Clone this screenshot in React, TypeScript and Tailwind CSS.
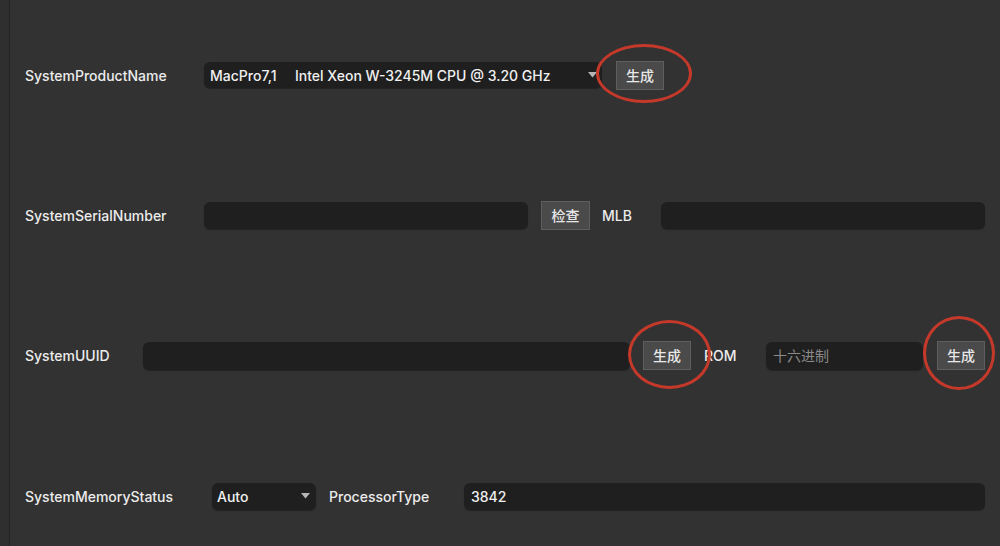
import React from "react";

const font = { fontFamily: "Inter, 'Noto Sans CJK SC', sans-serif" };

function Btn({ label }: { label: string }) {
  return (
    <div className="flex h-[29px] w-[48px] shrink-0 items-center justify-center border border-[#5e5e5e] bg-[#4a4a4a] text-[14px] font-medium text-[#e8e8e8]">
      {label}
    </div>
  );
}

function Ring({ cls }: { cls: string }) {
  return <div className={"pointer-events-none absolute rounded-[50%] border-[3px] border-[#c4392a] " + cls} />;
}

function Arrow() {
  return (
    <svg width="9" height="6" viewBox="0 0 9 6" className="shrink-0">
      <path d="M0 0 L9 0 L4.5 5.5 Z" fill="#b5b5b5" />
    </svg>
  );
}

function Label({ text, w }: { text: string; w: string }) {
  return <div className={"shrink-0 text-[14px] font-medium text-[#ececec] " + w}>{text}</div>;
}

export default function App() {
  return (
    <div className="flex h-[546px] w-[1000px] overflow-hidden bg-[#323232]" style={font}>
      <div className="w-[9px] shrink-0 bg-[#2f2f2f]" />
      <div className="w-[1px] shrink-0 bg-[#242424]" />
      <div className="flex flex-1 flex-col pl-[15px] pr-[15px] pt-[5px]">
        {/* Row 1 */}
        <div className="flex h-[140px] shrink-0 items-center">
          <Label text="SystemProductName" w="w-[179px]" />
          <div className="flex h-[26px] w-[398px] shrink-0 items-center rounded-[6px] bg-[#1f1f1f] pl-[6px] pr-[5px] text-[14px] font-medium text-[#f0f0f0] shadow-[0_1px_1px_rgba(0,0,0,0.3)]">
            <span className="w-[85px]">MacPro7,1</span>
            <span className="flex-1">Intel Xeon W-3245M CPU @ 3.20 GHz</span>
            <Arrow />
          </div>
          <div className="relative ml-[14px]">
            <Btn label="生成" />
            <Ring cls="left-[-20px] top-[-17px] h-[59px] w-[96px]" />
          </div>
        </div>
        {/* Row 2 */}
        <div className="flex h-[140px] shrink-0 items-center">
          <Label text="SystemSerialNumber" w="w-[179px]" />
          <div className="h-[27px] w-[324px] shrink-0 rounded-[6px] bg-[#1f1f1f] shadow-[0_1px_1px_rgba(0,0,0,0.3)]" />
          <div className="ml-[13px]">
            <div className="flex h-[29px] w-[49px] items-center justify-center border border-[#5e5e5e] bg-[#4a4a4a] text-[14px] font-medium text-[#e8e8e8]">检查</div>
          </div>
          <Label text="MLB" w="ml-[12px] w-[59px]" />
          <div className="h-[27px] flex-1 rounded-[6px] bg-[#1f1f1f] shadow-[0_1px_1px_rgba(0,0,0,0.3)]" />
        </div>
        {/* Row 3 */}
        <div className="flex h-[141px] shrink-0 items-center">
          <Label text="SystemUUID" w="w-[118px]" />
          <div className="h-[28px] w-[487px] shrink-0 rounded-[6px] bg-[#1f1f1f] shadow-[0_1px_1px_rgba(0,0,0,0.3)]" />
          <div className="relative ml-[13px]">
            <Btn label="生成" />
            <Ring cls="left-[-15px] top-[-21px] h-[69px] w-[83px]" />
          </div>
          <Label text="ROM" w="ml-[13px] w-[62px]" />
          <div className="flex h-[28px] w-[157px] shrink-0 items-center rounded-[6px] bg-[#1f1f1f] pl-[7px] text-[14px] text-[#8a8a8a] shadow-[0_1px_1px_rgba(0,0,0,0.3)]">
            十六进制
          </div>
          <div className="relative ml-[14px]">
            <Btn label="生成" />
            <Ring cls="left-[-14px] top-[-25px] h-[74px] w-[72px]" />
          </div>
        </div>
        {/* Row 4 */}
        <div className="flex h-[140px] shrink-0 items-center">
          <Label text="SystemMemoryStatus" w="w-[187px]" />
          <div className="flex h-[27px] w-[104px] shrink-0 items-center rounded-[6px] bg-[#1f1f1f] pl-[5px] pr-[6px] text-[14px] font-medium text-[#f0f0f0] shadow-[0_1px_1px_rgba(0,0,0,0.3)]">
            <span className="flex-1">Auto</span>
            <Arrow />
          </div>
          <Label text="ProcessorType" w="ml-[13px] w-[135px]" />
          <div className="flex h-[27px] flex-1 items-center rounded-[6px] bg-[#1f1f1f] pl-[7px] text-[14px] font-medium text-[#f0f0f0] shadow-[0_1px_1px_rgba(0,0,0,0.3)]">
            3842
          </div>
        </div>
      </div>
    </div>
  );
}
